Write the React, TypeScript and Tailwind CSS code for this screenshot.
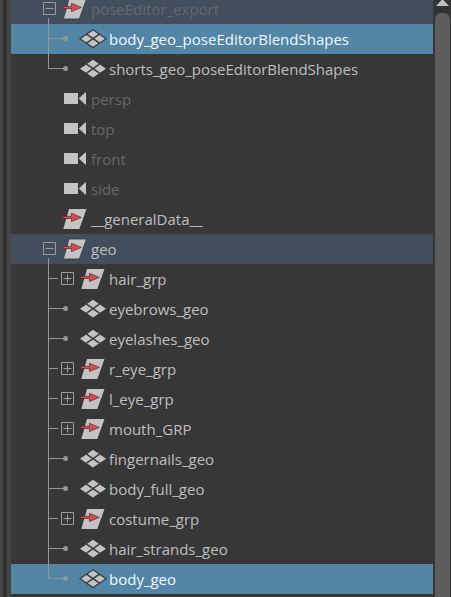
import { useState } from "react";

type Kind = "group" | "mesh" | "camera";

interface TreeNode {
  name: string;
  kind: Kind;
  muted?: boolean;
  selected?: boolean;
  expandable?: boolean;
  children?: TreeNode[];
}

const scene: TreeNode[] = [
  {
    name: "poseEditor_export",
    kind: "group",
    muted: true,
    children: [
      { name: "body_geo_poseEditorBlendShapes", kind: "mesh", selected: true },
      { name: "shorts_geo_poseEditorBlendShapes", kind: "mesh" },
    ],
  },
  { name: "persp", kind: "camera", muted: true },
  { name: "top", kind: "camera", muted: true },
  { name: "front", kind: "camera", muted: true },
  { name: "side", kind: "camera", muted: true },
  { name: "__generalData__", kind: "group" },
  {
    name: "geo",
    kind: "group",
    children: [
      { name: "hair_grp", kind: "group", expandable: true },
      { name: "eyebrows_geo", kind: "mesh" },
      { name: "eyelashes_geo", kind: "mesh" },
      { name: "r_eye_grp", kind: "group", expandable: true },
      { name: "l_eye_grp", kind: "group", expandable: true },
      { name: "mouth_GRP", kind: "group", expandable: true },
      { name: "fingernails_geo", kind: "mesh" },
      { name: "body_full_geo", kind: "mesh" },
      { name: "costume_grp", kind: "group", expandable: true },
      { name: "hair_strands_geo", kind: "mesh" },
      { name: "body_geo", kind: "mesh", selected: true },
    ],
  },
];

function NodeIcon({ kind, outlined }: { kind: Kind; outlined?: boolean }) {
  return (
    <svg viewBox="0 0 28 30" className="h-[30px] w-7 shrink-0" aria-hidden="true">
      {kind === "group" && (
        <>
          <path d="M8 5H25.5L18.3 25H2.3Z" fill="#c3c3c3" stroke={outlined ? "#2f353d" : "none"} strokeWidth="0.8" />
          <path d="M1.8 12.3H10.5V9.3L20.3 13.4L10.5 17.5V14.5H1.8Z" fill="#dc4a4c" stroke="#4a2c2e" strokeWidth="0.7" />
        </>
      )}
      {kind === "mesh" && (
        <>
          <path
            d="M14 5.8L27 14.7L14 23.6L1 14.7Z"
            fill="#c3c3c3"
            stroke={outlined ? "#39424b" : "none"}
            strokeWidth="1.3"
          />
          <path d="M7.5 10.2L20.5 19.2M20.5 10.2L7.5 19.2" stroke="#3b3b3b" strokeWidth="1.5" />
        </>
      )}
      {kind === "camera" && <path d="M3 9H17V20H3ZM17.8 14.5L24.2 8.6H25V20.4H24.2Z" fill="#c3c3c3" />}
    </svg>
  );
}

function Toggle({ open, name, onClick }: { open: boolean; name: string; onClick?: () => void }) {
  return (
    <button
      type="button"
      onClick={onClick}
      aria-label={(open ? "Collapse " : "Expand ") + name}
      className="flex h-[30px] w-[18px] shrink-0 items-center"
    >
      <svg viewBox="0 0 18 30" className="h-[30px] w-[18px]" aria-hidden="true" fill="none" stroke="#999da0">
        <path d="M0.5 8.5H12.5V20.5H0.5ZM2.5 14.5H10.5" />
        {!open && <path d="M6.5 10.5V18.5" />}
        {open && <path d="M5.5 24V30" stroke="#92979a" />}
      </svg>
    </button>
  );
}

function Branch({ last, leaf }: { last: boolean; leaf: boolean }) {
  return (
    <svg
      viewBox={leaf ? "0 0 36 30" : "0 0 18 30"}
      className={"h-[30px] shrink-0 " + (leaf ? "w-9" : "w-[18px]")}
      aria-hidden="true"
    >
      <path
        d={(last ? "M5.5 0V14.5" : "M5.5 0V30M5.5 14.5") + (leaf ? "H22" : "H15")}
        fill="none"
        stroke="#92979a"
      />
      {leaf && <circle cx="22.5" cy="14.5" r="2.5" fill="#92979a" />}
    </svg>
  );
}

function Label({ node }: { node: TreeNode }) {
  const tone = node.selected ? "text-[#f4f8fb]" : node.muted ? "text-[#666769]" : "text-[#bfbfbf]";
  return <span className={"ml-0.5 truncate " + tone}>{node.name}</span>;
}

function Item({ node }: { node: TreeNode }) {
  const [open, setOpen] = useState(true);
  const kids = node.children;
  return (
    <li role="treeitem" aria-expanded={kids ? open : undefined}>
      <div className={"flex h-[30px] items-center pl-8 " + (kids ? "bg-[#434e5c]" : "")}>
        {kids ? (
          <Toggle open={open} name={node.name} onClick={() => setOpen(!open)} />
        ) : (
          <span className="w-[18px] shrink-0" />
        )}
        <NodeIcon kind={node.kind} outlined={!!kids} />
        <Label node={node} />
      </div>
      {kids && open && (
        <ul role="group">
          {kids.map((child, i) => (
            <li
              key={child.name}
              role="treeitem"
              aria-selected={!!child.selected}
              className={"flex h-[30px] items-center pl-8 " + (child.selected ? "bg-[#5285a6]" : "")}
            >
              <Branch last={i === kids.length - 1} leaf={!child.expandable} />
              {child.expandable && <Toggle open={false} name={child.name} />}
              <NodeIcon kind={child.kind} outlined={child.selected} />
              <Label node={child} />
            </li>
          ))}
        </ul>
      )}
    </li>
  );
}

export default function App() {
  return (
    <div className="flex h-screen overflow-hidden bg-[#373737] font-['Open_Sans','Noto_Sans',sans-serif] text-[15px] leading-5">
      <div className="w-[11px] shrink-0 border-r-4 border-l-3 border-[#454545] bg-[#303030]" />
      <ul role="tree" aria-label="Outliner" className="-mt-1.5 min-w-0 flex-1">
        {scene.map((node) => (
          <Item key={node.name} node={node} />
        ))}
      </ul>
      <div className="ml-0.5 flex w-4 shrink-0 flex-col bg-[#323232] pr-px">
        <svg viewBox="0 0 15 13" className="h-[13px] w-[15px] shrink-0" aria-hidden="true">
          <path d="M7.5 -1L14 6H1Z" fill="#bdbdbd" />
        </svg>
        <div className="flex-1 rounded-t-md bg-[#5d5d5d]" />
      </div>
    </div>
  );
}
